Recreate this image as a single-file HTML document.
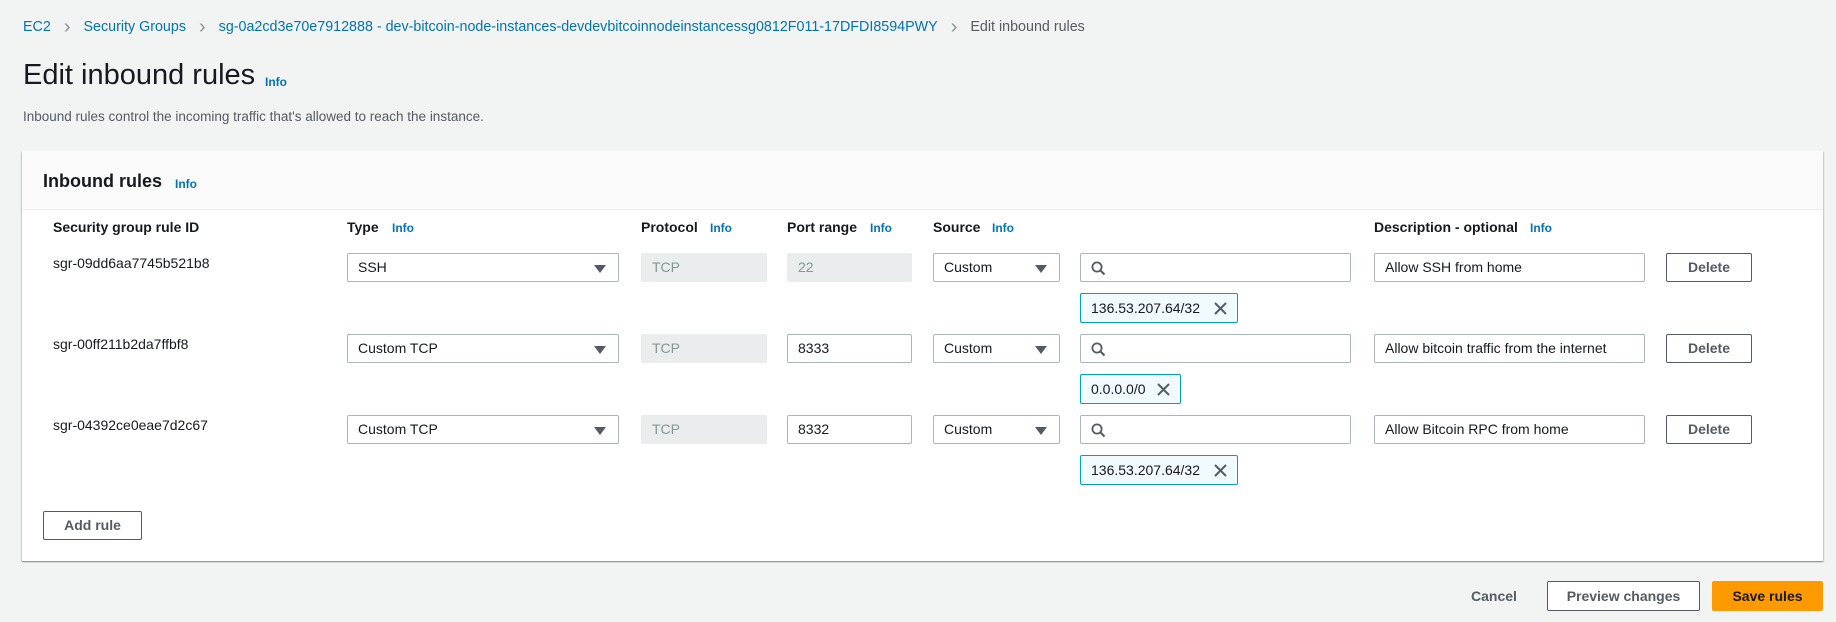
<!DOCTYPE html>
<html><head><meta charset="utf-8"><style>
*{box-sizing:border-box;margin:0;padding:0}
body{width:1836px;height:622px;background:#f2f3f3;font-family:"Liberation Sans",sans-serif;color:#16191f;position:relative;overflow:hidden;font-size:14px}
.a{position:absolute;white-space:nowrap}
.l{color:#0073bb}
.info{color:#0073bb;font-weight:bold;font-size:12px}
.h{font-weight:bold;font-size:14px}
.f{position:absolute;height:29px;border:1px solid #aab7b8;background:#fff;border-radius:2px;padding-left:10px;line-height:27px;font-size:14px}
.dis{background:#eaeded;border-color:#eaeded;color:#879596}
.tri{position:absolute;right:12px;top:11px;width:0;height:0;border-left:6px solid transparent;border-right:6px solid transparent;border-top:8px solid #545b64}
.btn{position:absolute;height:29px;border:1px solid #545b64;background:#fff;border-radius:2px;text-align:center;line-height:27px;font-weight:bold;color:#545b64;font-size:14px}
.chip{position:absolute;height:30px;border:1px solid #00a1c9;background:#f1faff;border-radius:2px;padding-left:10px;line-height:28px;font-size:14px}
.x{position:absolute;right:10px;top:8px;width:13px;height:13px}
.ch{color:#879596;margin:0 13px;font-size:20px;vertical-align:-2px}
</style></head><body>
<div class="a" style="left:23px;top:16px;font-size:14.3px"><span class="l">EC2</span><span class="ch">&#x203A;</span><span class="l">Security Groups</span><span class="ch">&#x203A;</span><span class="l">sg-0a2cd3e70e7912888 - dev-bitcoin-node-instances-devdevbitcoinnodeinstancessg0812F011-17DFDI8594PWY</span><span class="ch">&#x203A;</span><span style="color:#545b64">Edit inbound rules</span></div>
<div class="a" style="left:23px;top:59px;font-size:29px">Edit inbound rules</div>
<div class="a info" style="left:265px;top:75px">Info</div>
<div class="a" style="left:23px;top:109px;font-size:13.5px;color:#545b64">Inbound rules control the incoming traffic that's allowed to reach the instance.</div>
<div class="a" style="left:22px;top:151px;width:1801px;height:410px;background:#fff;box-shadow:0 1px 1px rgba(0,28,36,.3),1px 1px 1px rgba(0,28,36,.15),-1px 1px 1px rgba(0,28,36,.15)">
<div style="height:59px;background:#fafafa;border-bottom:1px solid #eaeded"></div></div>
<div class="a" style="left:43px;top:171px;font-size:18px;font-weight:bold">Inbound rules</div>
<div class="a info" style="left:175px;top:177px">Info</div>
<div class="a h" style="left:53px;top:219px">Security group rule ID</div>
<div class="a h" style="left:347px;top:219px">Type</div><div class="a info" style="left:392px;top:221px">Info</div>
<div class="a h" style="left:641px;top:219px">Protocol</div><div class="a info" style="left:710px;top:221px">Info</div>
<div class="a h" style="left:787px;top:219px">Port range</div><div class="a info" style="left:870px;top:221px">Info</div>
<div class="a h" style="left:933px;top:219px">Source</div><div class="a info" style="left:992px;top:221px">Info</div>
<div class="a h" style="left:1374px;top:219px">Description - optional</div><div class="a info" style="left:1530px;top:221px">Info</div>

<div class="a" style="left:53px;top:255px">sgr-09dd6aa7745b521b8</div>
<div class="f" style="left:347px;top:253px;width:272px">SSH<div class="tri"></div></div>
<div class="f dis" style="left:641px;top:253px;width:126px">TCP</div>
<div class="f dis" style="left:787px;top:253px;width:125px">22</div>
<div class="f" style="left:933px;top:253px;width:127px">Custom<div class="tri"></div></div>
<div class="f" style="left:1080px;top:253px;width:271px"><svg style="position:absolute;left:10px;top:7px" width="15" height="15" viewBox="0 0 15 15"><circle cx="6" cy="6" r="4.6" fill="none" stroke="#545b64" stroke-width="1.8"/><path d="M9.5 9.5L13.5 13.5" stroke="#545b64" stroke-width="2"/></svg></div>
<div class="f" style="left:1374px;top:253px;width:271px">Allow SSH from home</div>
<div class="btn" style="left:1666px;top:253px;width:86px">Delete</div>
<div class="chip" style="left:1080px;top:293px;width:158px">136.53.207.64/32<svg class="x" viewBox="0 0 13 13"><path d="M1 1L12 12M12 1L1 12" stroke="#545b64" stroke-width="2"/></svg></div>

<div class="a" style="left:53px;top:336px">sgr-00ff211b2da7ffbf8</div>
<div class="f" style="left:347px;top:334px;width:272px">Custom TCP<div class="tri"></div></div>
<div class="f dis" style="left:641px;top:334px;width:126px">TCP</div>
<div class="f" style="left:787px;top:334px;width:125px">8333</div>
<div class="f" style="left:933px;top:334px;width:127px">Custom<div class="tri"></div></div>
<div class="f" style="left:1080px;top:334px;width:271px"><svg style="position:absolute;left:10px;top:7px" width="15" height="15" viewBox="0 0 15 15"><circle cx="6" cy="6" r="4.6" fill="none" stroke="#545b64" stroke-width="1.8"/><path d="M9.5 9.5L13.5 13.5" stroke="#545b64" stroke-width="2"/></svg></div>
<div class="f" style="left:1374px;top:334px;width:271px">Allow bitcoin traffic from the internet</div>
<div class="btn" style="left:1666px;top:334px;width:86px">Delete</div>
<div class="chip" style="left:1080px;top:374px;width:101px">0.0.0.0/0<svg class="x" viewBox="0 0 13 13"><path d="M1 1L12 12M12 1L1 12" stroke="#545b64" stroke-width="2"/></svg></div>

<div class="a" style="left:53px;top:417px">sgr-04392ce0eae7d2c67</div>
<div class="f" style="left:347px;top:415px;width:272px">Custom TCP<div class="tri"></div></div>
<div class="f dis" style="left:641px;top:415px;width:126px">TCP</div>
<div class="f" style="left:787px;top:415px;width:125px">8332</div>
<div class="f" style="left:933px;top:415px;width:127px">Custom<div class="tri"></div></div>
<div class="f" style="left:1080px;top:415px;width:271px"><svg style="position:absolute;left:10px;top:7px" width="15" height="15" viewBox="0 0 15 15"><circle cx="6" cy="6" r="4.6" fill="none" stroke="#545b64" stroke-width="1.8"/><path d="M9.5 9.5L13.5 13.5" stroke="#545b64" stroke-width="2"/></svg></div>
<div class="f" style="left:1374px;top:415px;width:271px">Allow Bitcoin RPC from home</div>
<div class="btn" style="left:1666px;top:415px;width:86px">Delete</div>
<div class="chip" style="left:1080px;top:455px;width:158px">136.53.207.64/32<svg class="x" viewBox="0 0 13 13"><path d="M1 1L12 12M12 1L1 12" stroke="#545b64" stroke-width="2"/></svg></div>

<div class="btn" style="left:43px;top:511px;width:99px">Add rule</div>

<div class="a" style="left:1471px;top:588px;font-weight:bold;color:#545b64">Cancel</div>
<div class="btn" style="left:1547px;top:581px;width:153px;height:30px;line-height:28px">Preview changes</div>
<div class="a" style="left:1712px;top:581px;width:111px;height:30px;background:#ff9900;border-radius:2px;text-align:center;line-height:30px;font-weight:bold;color:#16191f">Save rules</div>
</body></html>
